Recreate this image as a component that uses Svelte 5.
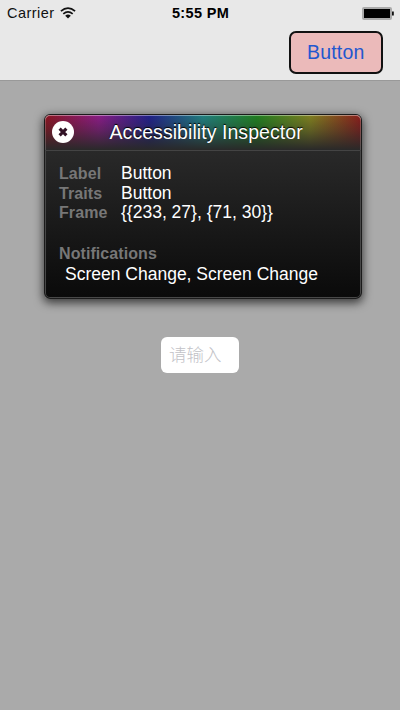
<script>
  const rows = [
    { name: 'Label', value: 'Button' },
    { name: 'Traits', value: 'Button' },
    { name: 'Frame', value: '{{233, 27}, {71, 30}}' }
  ];
</script>

<div class="screen">
  <header>
    <div class="status">
      <div class="carrier">
        <span>Carrier</span>
        <svg width="16" height="12" viewBox="0 0 16 12" fill="none" stroke="#111" stroke-width="1.7">
          <path d="M.9 4.2Q8-2 15.1 4.2M3.3 6.8Q8 2.8 12.7 6.8" />
          <path d="M5.2 8.7Q8 6.3 10.8 8.7L8 11.5Z" fill="#111" stroke="none" />
        </svg>
      </div>
      <time>5:55 PM</time>
      <svg class="battery" width="32" height="13" viewBox="0 0 32 13">
        <rect x="1" y="1" width="28" height="11" rx="1" fill="#000" stroke="#aaa" stroke-width="2" />
        <rect x="30" y="4.5" width="1.8" height="4" fill="#111" />
      </svg>
    </div>
    <div class="nav"><button class="action">Button</button></div>
  </header>

  <main>
    <section class="inspector">
      <div class="title">
        <svg class="close" width="24" height="24" viewBox="0 0 24 24">
          <circle cx="12" cy="12" r="11" fill="#fff" />
          <path d="M8.6 8.6l6.8 6.8M15.4 8.6l-6.8 6.8" stroke="#321326" stroke-width="3.1" />
        </svg>
        <h1>Accessibility Inspector</h1>
      </div>
      <div class="body">
        {#each rows as row}
          <div class="row"><b>{row.name}</b><span>{row.value}</span></div>
        {/each}
        <div class="notes">
          <b>Notifications</b>
          <p>Screen Change, Screen Change</p>
        </div>
      </div>
    </section>
    <input placeholder="请输入" aria-label="请输入" />
  </main>
</div>

<style>
  :global(body) { margin: 0; }
  .screen {
    width: 400px;
    height: 710px;
    display: flex;
    flex-direction: column;
    overflow: hidden;
    background: #aaa;
    font-family: "Liberation Sans", Arial, sans-serif;
  }
  header {
    height: 81px;
    box-sizing: border-box;
    background: #e8e8e8;
    border-bottom: 1px solid #999;
  }
  .status {
    height: 26px;
    display: grid;
    grid-template-columns: 1fr auto 1fr;
    align-items: center;
    padding: 0 6px 0 7px;
    font-size: 14.5px;
    color: #111;
  }
  .carrier { display: flex; align-items: center; gap: 6px; letter-spacing: .45px; }
  time { font-weight: bold; letter-spacing: .35px; color: #000; }
  .battery { justify-self: end; }
  .nav { display: flex; justify-content: flex-end; padding: 5px 17.5px 0 0; }
  .action {
    width: 93.5px;
    height: 42.5px;
    box-sizing: border-box;
    padding: 0;
    border: 2px solid #111;
    border-radius: 7px;
    background: #ebbaba;
    color: #2257cf;
    font: 19.5px "Liberation Sans", Arial, sans-serif;
    letter-spacing: .15px;
  }
  main {
    flex: 1;
    display: flex;
    flex-direction: column;
    align-items: center;
    padding-top: 33px;
  }
  .inspector {
    width: 318px;
    height: 185px;
    box-sizing: border-box;
    margin-left: 6px;
    border: 1px solid #1b1b1b;
    border-radius: 6px;
    background: linear-gradient(#292929 36px, #0a0a0a);
    box-shadow: inset 0 0 0 1px #484848, 0 3px 10px 1px rgba(0, 0, 0, .65);
    color: #fff;
  }
  .title {
    height: 36px;
    box-sizing: border-box;
    display: flex;
    align-items: center;
    padding: 0 0 1px 6px;
    border-bottom: 1px solid #444;
    border-radius: 5px 5px 0 0;
    box-shadow: inset 0 1px 0 rgba(255, 255, 255, .4), inset 1px 0 0 rgba(255, 255, 255, .2), inset -1px 0 0 rgba(255, 255, 255, .2);
    background:
      linear-gradient(rgba(41, 41, 41, 0), rgba(41, 41, 41, .4) 45%, #292929),
      linear-gradient(90deg, #8c1520, #8b1c86 17%, #20208a 33%, #208080 50%, #208020 67%, #808020 84%, #8a1c1c);
  }
  .close { flex: none; }
  h1 {
    margin: 0 0 0 34.5px;
    font-size: 19.5px;
    font-weight: normal;
    line-height: 24px;
    letter-spacing: .06px;
    white-space: nowrap;
    text-shadow: 0 -1px 1px #000;
  }
  .body { padding: 12px 14px; }
  .row { display: flex; height: 19.5px; align-items: baseline; }
  b { width: 62px; font-size: 16px; line-height: 20px; letter-spacing: .08px; color: #777; }
  .row span, p { font-size: 17.5px; line-height: 20px; letter-spacing: 0; white-space: nowrap; }
  .notes { margin-top: 22px; }
  .notes b { display: block; }
  p { margin: 0 0 0 6px; }
  input {
    width: 78px;
    height: 36.5px;
    box-sizing: border-box;
    margin-top: 37.5px;
    padding: 0 8px 2px;
    border: 0;
    border-radius: 6px;
    background: #fff;
    font: 17.5px "Noto Sans CJK SC", sans-serif;
  }
  input::placeholder { color: #c2c2c7; opacity: 1; font-weight: 300; }
</style>
